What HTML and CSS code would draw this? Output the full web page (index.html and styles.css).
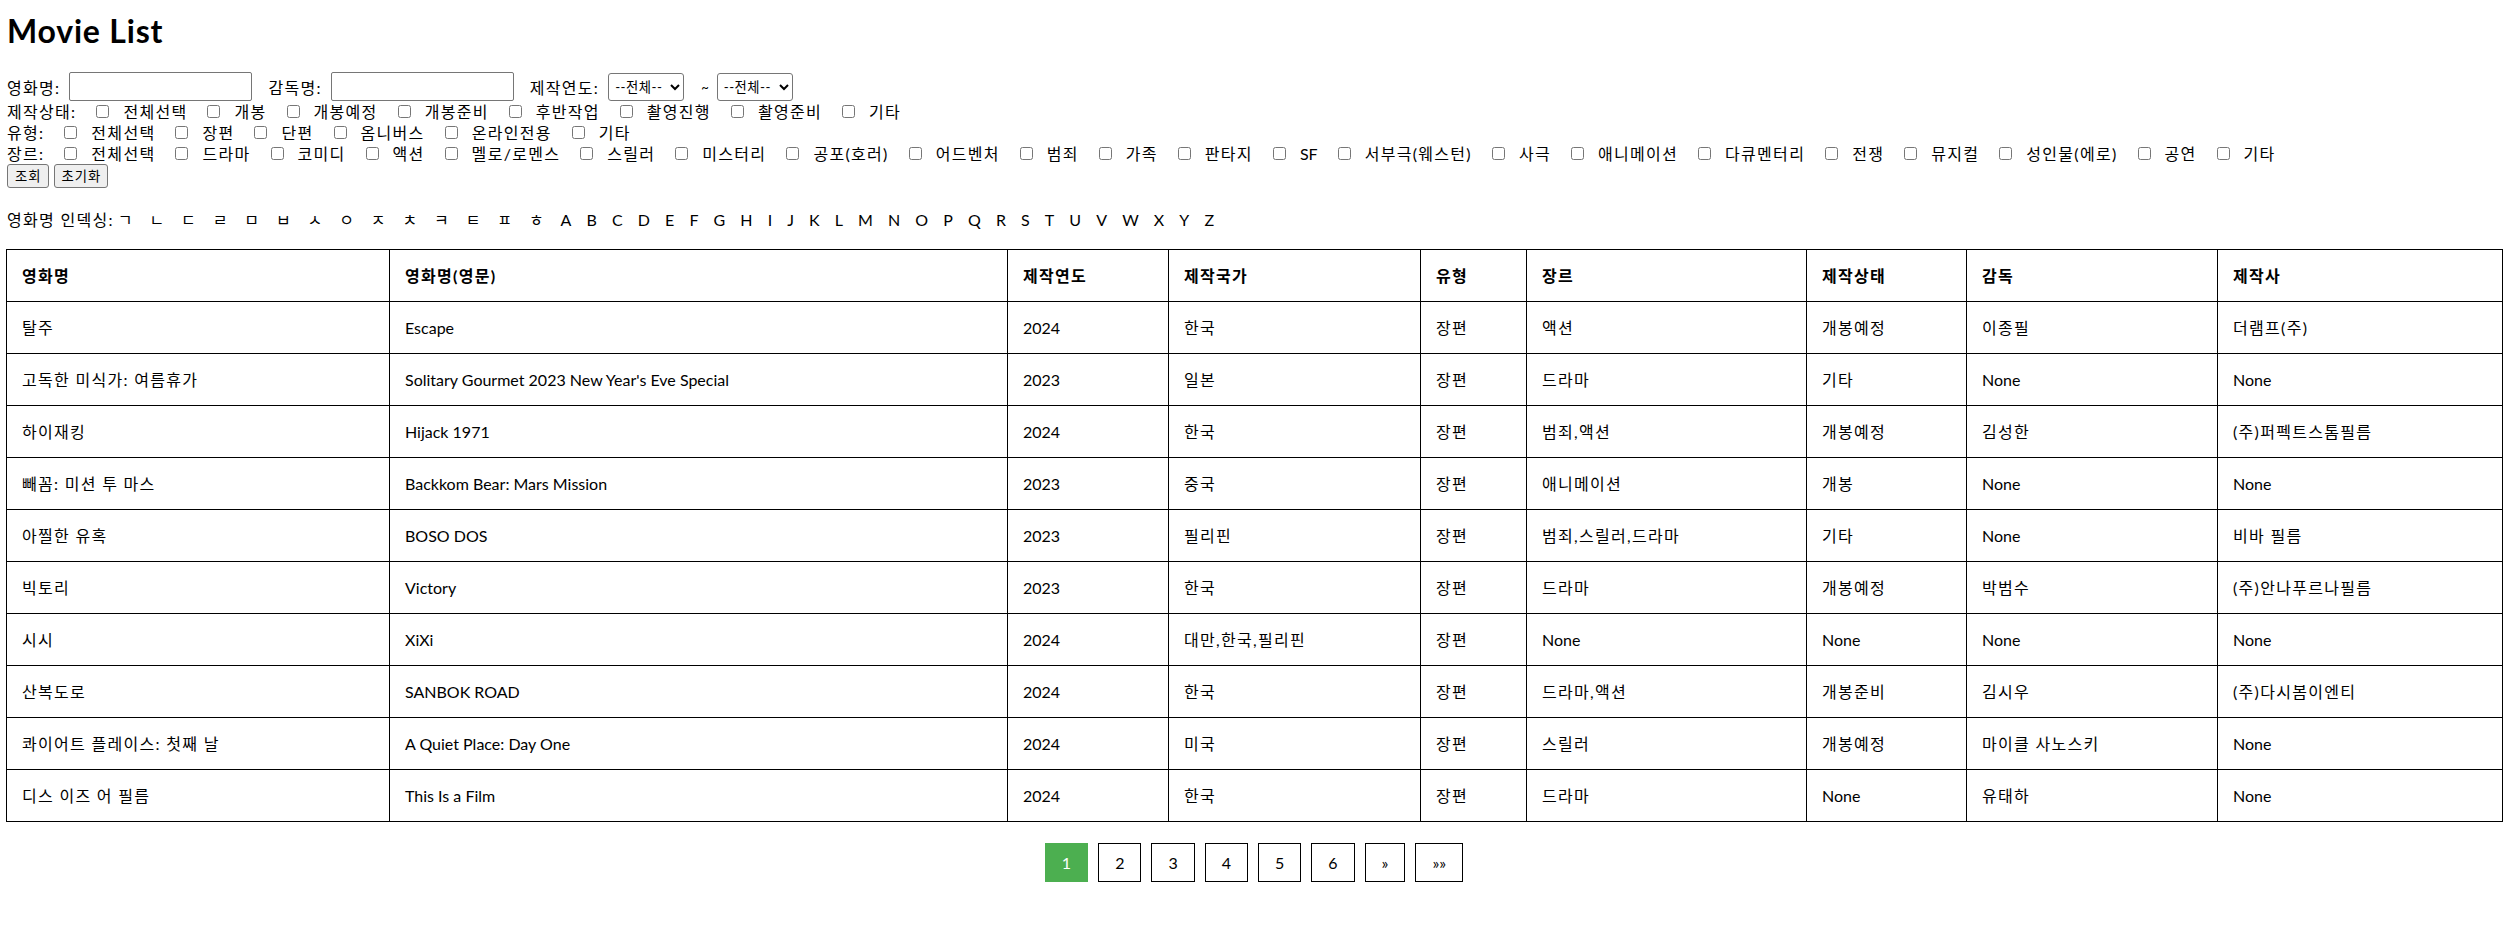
FILE: index.html
```html
<!DOCTYPE html>
<html lang="ko">
<head>
<meta charset="utf-8">
<title>Movie List</title>
<link rel="stylesheet" href="styles.css">
</head>
<body>
<div class="page">
  <h1 class="title">Movie List</h1>

  <form class="filters">
    <div class="row row-search">
      <label class="lbl">영화명:</label>
      <input type="text" class="txt">
      <label class="lbl">감독명:</label>
      <input type="text" class="txt">
      <label class="lbl">제작연도:</label>
      <select class="sel"><option>--전체--</option></select>
      <span class="tilde">~</span>
      <select class="sel"><option>--전체--</option></select>
    </div>

    <div class="row row-check">
      <span class="lbl-c">제작상태:</span>
      <input type="checkbox" class="cb"><span>전체선택</span>
      <input type="checkbox" class="cb"><span>개봉</span>
      <input type="checkbox" class="cb"><span>개봉예정</span>
      <input type="checkbox" class="cb"><span>개봉준비</span>
      <input type="checkbox" class="cb"><span>후반작업</span>
      <input type="checkbox" class="cb"><span>촬영진행</span>
      <input type="checkbox" class="cb"><span>촬영준비</span>
      <input type="checkbox" class="cb"><span>기타</span>
    </div>

    <div class="row row-check">
      <span class="lbl-c">유형:</span>
      <input type="checkbox" class="cb"><span>전체선택</span>
      <input type="checkbox" class="cb"><span>장편</span>
      <input type="checkbox" class="cb"><span>단편</span>
      <input type="checkbox" class="cb"><span>옴니버스</span>
      <input type="checkbox" class="cb"><span>온라인전용</span>
      <input type="checkbox" class="cb"><span>기타</span>
    </div>

    <div class="row row-check">
      <span class="lbl-c">장르:</span>
      <input type="checkbox" class="cb"><span>전체선택</span>
      <input type="checkbox" class="cb"><span>드라마</span>
      <input type="checkbox" class="cb"><span>코미디</span>
      <input type="checkbox" class="cb"><span>액션</span>
      <input type="checkbox" class="cb"><span>멜로/로멘스</span>
      <input type="checkbox" class="cb"><span>스릴러</span>
      <input type="checkbox" class="cb"><span>미스터리</span>
      <input type="checkbox" class="cb"><span>공포(호러)</span>
      <input type="checkbox" class="cb"><span>어드벤처</span>
      <input type="checkbox" class="cb"><span>범죄</span>
      <input type="checkbox" class="cb"><span>가족</span>
      <input type="checkbox" class="cb"><span>판타지</span>
      <input type="checkbox" class="cb"><span class="en">SF</span>
      <input type="checkbox" class="cb"><span>서부극(웨스턴)</span>
      <input type="checkbox" class="cb"><span>사극</span>
      <input type="checkbox" class="cb"><span>애니메이션</span>
      <input type="checkbox" class="cb"><span>다큐멘터리</span>
      <input type="checkbox" class="cb"><span>전쟁</span>
      <input type="checkbox" class="cb"><span>뮤지컬</span>
      <input type="checkbox" class="cb"><span>성인물(에로)</span>
      <input type="checkbox" class="cb"><span>공연</span>
      <input type="checkbox" class="cb"><span>기타</span>
    </div>

    <div class="row row-btn">
      <button type="button" class="btn">조회</button>
      <button type="button" class="btn">초기화</button>
    </div>
  </form>

  <div class="index-row">
    <span class="index-lbl">영화명 인덱싱:</span>
    <a class="idx">ㄱ</a><a class="idx">ㄴ</a><a class="idx">ㄷ</a><a class="idx">ㄹ</a><a class="idx">ㅁ</a><a class="idx">ㅂ</a><a class="idx">ㅅ</a><a class="idx">ㅇ</a><a class="idx">ㅈ</a><a class="idx">ㅊ</a><a class="idx">ㅋ</a><a class="idx">ㅌ</a><a class="idx">ㅍ</a><a class="idx">ㅎ</a><a class="idx en">A</a><a class="idx en">B</a><a class="idx en">C</a><a class="idx en">D</a><a class="idx en">E</a><a class="idx en">F</a><a class="idx en">G</a><a class="idx en">H</a><a class="idx en">I</a><a class="idx en">J</a><a class="idx en">K</a><a class="idx en">L</a><a class="idx en">M</a><a class="idx en">N</a><a class="idx en">O</a><a class="idx en">P</a><a class="idx en">Q</a><a class="idx en">R</a><a class="idx en">S</a><a class="idx en">T</a><a class="idx en">U</a><a class="idx en">V</a><a class="idx en">W</a><a class="idx en">X</a><a class="idx en">Y</a><a class="idx en">Z</a>
  </div>

  <table class="movies">
    <colgroup>
      <col class="c1"><col class="c2"><col class="c3"><col class="c4"><col class="c5"><col class="c6"><col class="c7"><col class="c8"><col class="c9">
    </colgroup>
    <thead>
      <tr><th>영화명</th><th>영화명(영문)</th><th>제작연도</th><th>제작국가</th><th>유형</th><th>장르</th><th>제작상태</th><th>감독</th><th>제작사</th></tr>
    </thead>
    <tbody>
      <tr><td>탈주</td><td class="en">Escape</td><td class="en">2024</td><td>한국</td><td>장편</td><td>액션</td><td>개봉예정</td><td>이종필</td><td>더램프(주)</td></tr>
      <tr><td>고독한 미식가: 여름휴가</td><td class="en">Solitary Gourmet 2023 New Year's Eve Special</td><td class="en">2023</td><td>일본</td><td>장편</td><td>드라마</td><td>기타</td><td class="en">None</td><td class="en">None</td></tr>
      <tr><td>하이재킹</td><td class="en">Hijack 1971</td><td class="en">2024</td><td>한국</td><td>장편</td><td>범죄,액션</td><td>개봉예정</td><td>김성한</td><td>(주)퍼펙트스톰필름</td></tr>
      <tr><td>빼꼼: 미션 투 마스</td><td class="en">Backkom Bear: Mars Mission</td><td class="en">2023</td><td>중국</td><td>장편</td><td>애니메이션</td><td>개봉</td><td class="en">None</td><td class="en">None</td></tr>
      <tr><td>아찔한 유혹</td><td class="en">BOSO DOS</td><td class="en">2023</td><td>필리핀</td><td>장편</td><td>범죄,스릴러,드라마</td><td>기타</td><td class="en">None</td><td>비바 필름</td></tr>
      <tr><td>빅토리</td><td class="en">Victory</td><td class="en">2023</td><td>한국</td><td>장편</td><td>드라마</td><td>개봉예정</td><td>박범수</td><td>(주)안나푸르나필름</td></tr>
      <tr><td>시시</td><td class="en">XiXi</td><td class="en">2024</td><td>대만,한국,필리핀</td><td>장편</td><td class="en">None</td><td class="en">None</td><td class="en">None</td><td class="en">None</td></tr>
      <tr><td>산복도로</td><td class="en">SANBOK ROAD</td><td class="en">2024</td><td>한국</td><td>장편</td><td>드라마,액션</td><td>개봉준비</td><td>김시우</td><td>(주)다시봄이엔티</td></tr>
      <tr><td>콰이어트 플레이스: 첫째 날</td><td class="en">A Quiet Place: Day One</td><td class="en">2024</td><td>미국</td><td>장편</td><td>스릴러</td><td>개봉예정</td><td>마이클 사노스키</td><td class="en">None</td></tr>
      <tr><td>디스 이즈 어 필름</td><td class="en">This Is a Film</td><td class="en">2024</td><td>한국</td><td>장편</td><td>드라마</td><td class="en">None</td><td>유태하</td><td class="en">None</td></tr>
    </tbody>
  </table>

  <nav class="pager">
    <a class="pg active">1</a>
    <a class="pg">2</a>
    <a class="pg">3</a>
    <a class="pg">4</a>
    <a class="pg">5</a>
    <a class="pg">6</a>
    <a class="pg">&raquo;</a>
    <a class="pg">&raquo;&raquo;</a>
  </nav>
</div>
</body>
</html>
```

FILE: styles.css
```css
html, body {
  margin: 0;
  padding: 0;
  background: #fff;
}

body {
  font-family: "Lato", "Noto Sans CJK KR", sans-serif;
  font-size: 16px;
  color: #000;
  letter-spacing: 1.3px;
}

.en {
  letter-spacing: 0;
}

.page {
  width: 2496px;
  padding: 0 6px;
}

.title {
  font-size: 32px;
  font-weight: bold;
  line-height: 42px;
  letter-spacing: 0.8px;
  margin: 10px 0 20px 1px;
}

.filters {
  margin: 0;
}

.row {
  display: flex;
  align-items: center;
  white-space: nowrap;
}

.row-search {
  height: 29px;
}

.lbl {
  margin: 0 9px 0 1px;
}

.txt {
  box-sizing: border-box;
  width: 183px;
  height: 29px;
  margin: 0 15px 0 0;
  padding: 2px 4px;
  border: 1px solid #767676;
  border-radius: 2px;
  font: 13.33px "Lato", "Noto Sans CJK KR", sans-serif;
}

.sel {
  box-sizing: border-box;
  width: 76px;
  height: 28px;
  margin: 0;
  padding: 0 2px;
  border: 1px solid #767676;
  border-radius: 3px;
  background: #fff;
  color: #000;
  letter-spacing: 0.5px;
  font: 13.33px "Lato", "Noto Sans CJK KR", sans-serif;
}

.tilde {
  margin: 0 8px 0 17px;
  font-size: 13px;
  letter-spacing: 0;
}

.row-check {
  height: 21px;
  line-height: 21px;
}

.lbl-c {
  margin-left: 1px;
}

.cb {
  width: 13px;
  height: 13px;
  margin: 0 14px 0 20px;
}

.row-btn {
  height: 24px;
  gap: 5px;
  padding-left: 1px;
}

.btn {
  box-sizing: border-box;
  height: 24px;
  margin: 0;
  padding: 0 6px 0 7px;
  border: 1px solid #767676;
  border-radius: 3px;
  background: #efefef;
  color: #000;
  font: 13.33px "Lato", "Noto Sans CJK KR", sans-serif;
  letter-spacing: 1px;
  line-height: 20px;
}

.index-row {
  display: flex;
  align-items: center;
  height: 21px;
  line-height: 21px;
  margin-top: 21px;
  padding-left: 1px;
}

.index-lbl {
  margin-right: 4px;
}

.idx {
  margin-right: 15.6px;
  color: #000;
  text-decoration: none;
}

.idx.en {
  margin-right: 15.1px;
}

.movies {
  width: 2496px;
  margin-top: 19px;
  border-collapse: collapse;
  table-layout: fixed;
}

.movies th,
.movies td {
  border: 1px solid #000;
  padding: 15px;
  line-height: 21px;
  text-align: left;
  vertical-align: middle;
  white-space: nowrap;
}

.movies th {
  font-weight: bold;
}

.c1 { width: 383px; }
.c2 { width: 618px; }
.c3 { width: 161px; }
.c4 { width: 252px; }
.c5 { width: 106px; }
.c6 { width: 280px; }
.c7 { width: 160px; }
.c8 { width: 251px; }
.c9 { width: 285px; }

.pager {
  display: flex;
  justify-content: center;
  gap: 10px;
  margin-top: 21px;
  letter-spacing: 0;
}

.pg {
  display: block;
  padding: 8px 16px;
  border: 1px solid #000;
  line-height: 21px;
  color: #000;
  text-decoration: none;
}

.pg.active {
  background: #4caf50;
  border-color: #4caf50;
  color: #fff;
}
```
